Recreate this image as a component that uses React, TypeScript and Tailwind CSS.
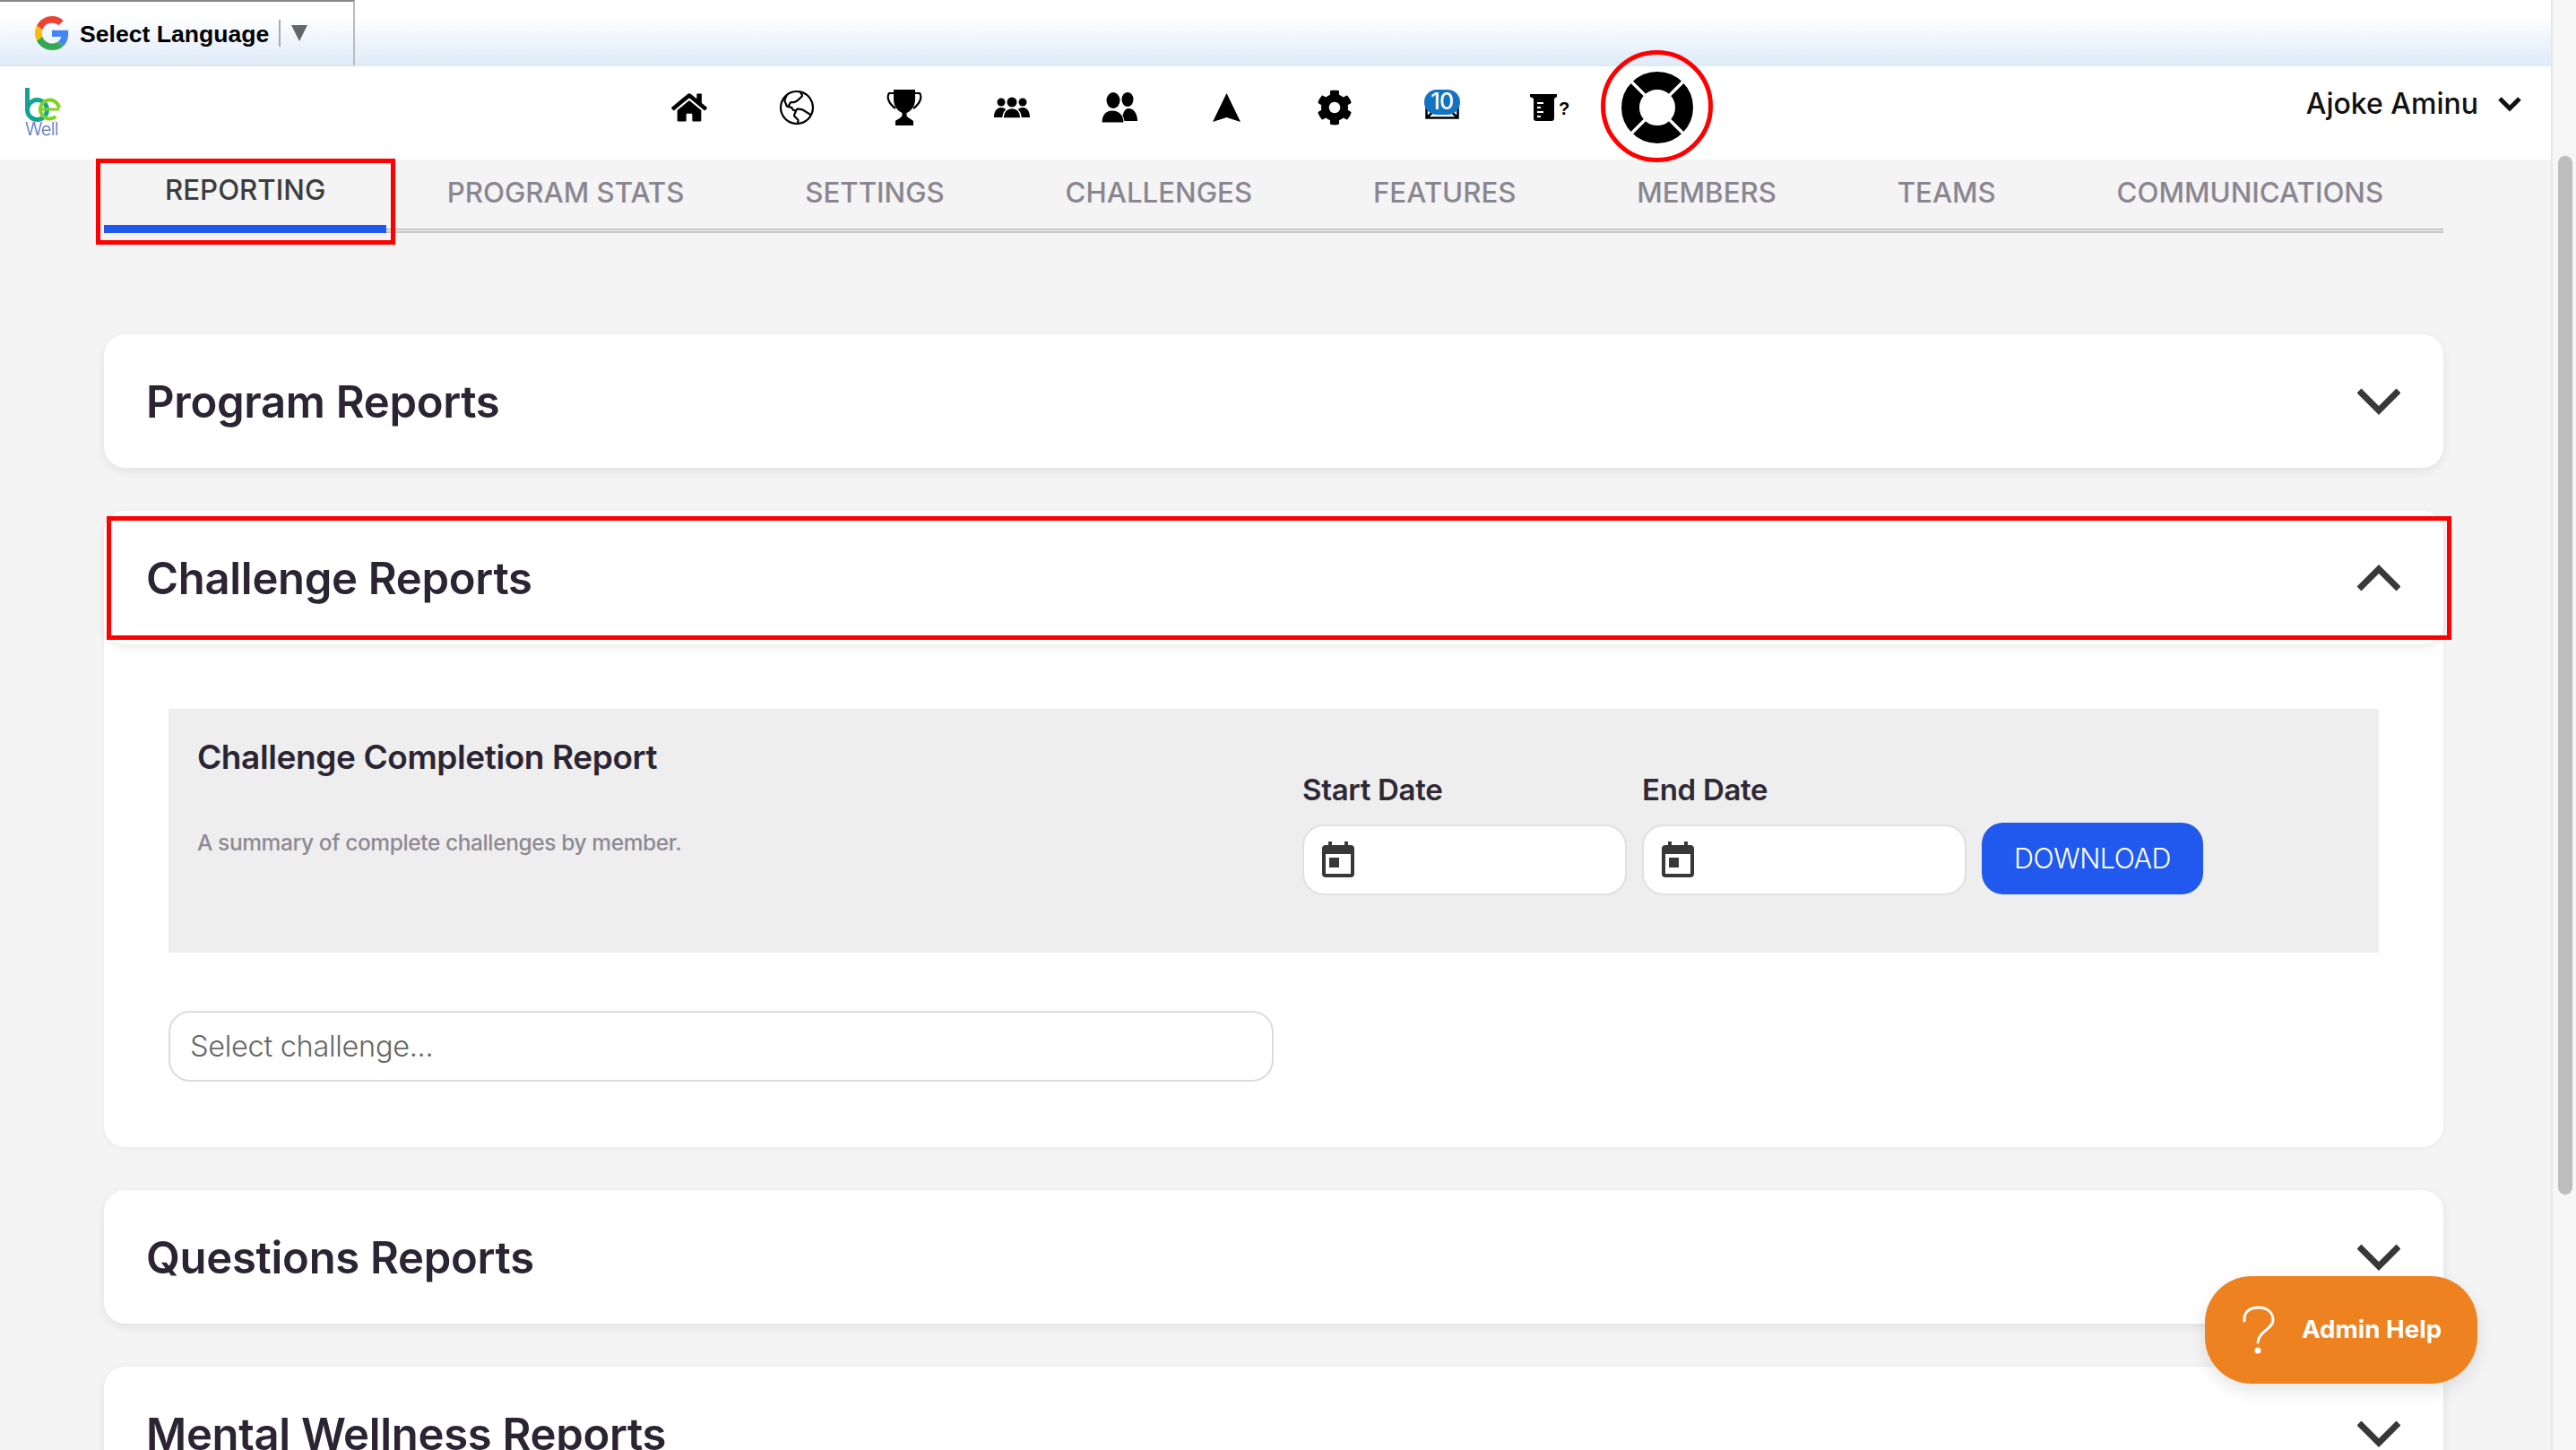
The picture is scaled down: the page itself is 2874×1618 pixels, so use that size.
import React from "react";
import { FaHome, FaCog } from "react-icons/fa";
import { PiGlobeHemisphereWestLight } from "react-icons/pi";

const tabs = ["PROGRAM STATS", "SETTINGS", "CHALLENGES", "FEATURES", "MEMBERS", "TEAMS", "COMMUNICATIONS"];

const Chevron = ({ up = false }: { up?: boolean }) => (
  <svg width="48" height="30" viewBox="0 0 48 30" fill="none" stroke="#383838" strokeWidth="7">
    <polyline points={up ? "2,27 24,5 46,27" : "2,3 24,25 46,3"} />
  </svg>
);

const GoogleG = () => (
  <svg width="38" height="38" viewBox="0 0 48 48">
    <path fill="#EA4335" d="M24 9.5c3.5 0 6.7 1.2 9.2 3.600l6.900-6.900C35.900 2.400 30.500 0 24 0 14.600 0 6.500 5.400 2.600 13.200l8 6.200C12.400 13.700 17.700 9.500 24 9.500z" />
    <path fill="#4285F4" d="M47 24.500c0-1.600-.1-3.100-.4-4.500H24v9h12.900c-.6 3-2.200 5.500-4.700 7.200l7.700 6c4.500-4.200 7.100-10.300 7.100-17.700z" />
    <path fill="#FBBC05" d="M10.600 28.600c-.5-1.400-.8-3-.8-4.600s.3-3.200.8-4.600l-8-6.200C.9 16.500 0 20.100 0 24s.9 7.500 2.600 10.800l8-6.200z" />
    <path fill="#34A853" d="M24 48c6.500 0 11.900-2.100 15.900-5.800l-7.700-6c-2.200 1.500-4.900 2.300-8.200 2.300-6.300 0-11.600-4.200-13.400-9.900l-8 6.200C6.500 42.600 14.600 48 24 48z" />
  </svg>
);

const Logo = () => (
  <div className="mt-[10px] flex w-[40px] flex-col items-start">
    <svg width="40" height="38" viewBox="0 0 40 38" fill="none">
      <path d="M2.500 0V25" stroke="#16a294" strokeWidth="5" />
      <circle cx="13.500" cy="24.500" r="11" stroke="#16a294" strokeWidth="5" />
      <circle cx="27.500" cy="24" r="10.500" stroke="#7ed321" strokeWidth="4" strokeDasharray="55 11" transform="rotate(50 27.500 24)" />
      <path d="M16 24H38" stroke="#7ed321" strokeWidth="3" />
    </svg>
    <span className="font-[Inter,sans-serif] text-[20px] leading-[17px] font-light tracking-[-0.6px] text-[#4f74c4]">Well</span>
  </div>
);

const Trophy = () => (
  <svg width="40" height="40" viewBox="0 0 40 40">
    <path d="M8 0H32V11C32 19 27 24 22.500 26V29C24 32 28 33 30 35V40H10V35C12 33 16 32 17.500 29V26C13 24 8 19 8 11Z" fill="#000" />
    <path d="M8 4H3C0 8 2 15 10 21M32 4H37C40 8 38 15 30 21" fill="none" stroke="#000" strokeWidth="2.200" />
  </svg>
);

const Group = () => (
  <svg width="40" height="24" viewBox="0 0 40 24">
    <circle cx="8" cy="6" r="4.500" /><circle cx="32" cy="6" r="4.500" />
    <path d="M0 23C0 16 3 12 8 12S16 16 16 23ZM24 23C24 16 27 12 32 12S40 16 40 23Z" />
    <circle cx="20" cy="6" r="5.500" />
    <path d="M10 24C10 17 14 12.500 20 12.500S30 17 30 24Z" stroke="#fff" strokeWidth="1.500" />
  </svg>
);

const People = () => (
  <svg width="40" height="34" viewBox="0 0 40 34">
    <ellipse cx="29" cy="8" rx="6.500" ry="8" />
    <path d="M22 32C24 22 26 18 30 18C36 18 40 24 40 32Z" />
    <ellipse cx="13" cy="9" rx="7.500" ry="9" />
    <path d="M0 34C0 25 5 20 12 20S25 25 25 34Z" stroke="#fff" strokeWidth="1" />
  </svg>
);

const Mail = () => (
  <div className="relative mb-[7px] h-[33px] w-[38px]">
    <svg className="absolute top-0 left-0" width="38" height="33" viewBox="0 0 38 33" fill="none" stroke="#000" strokeWidth="2.500">
      <path d="M1.500 14V31.500H36.500V14M2 31L14 20M36 31L24 20" />
    </svg>
    <span className="absolute top-0 -left-[1px] flex h-[28px] w-[40px] items-center justify-center rounded-full bg-[#1273c4] font-[Inter,sans-serif] text-[25px] font-medium tracking-[-0.5px] text-white">10</span>
  </div>
);

const Beaker = () => (
  <div className="flex items-end gap-[2px]">
    <svg width="30" height="30" viewBox="0 0 30 30">
      <path fillRule="evenodd" d="M0 0H30V3L27 5V27C27 29 26 30 24 30H7C5 30 4 29 4 27V5L0 3ZM8 9V11H15V9ZM8 14V16H12V14ZM8 19V21H15V19ZM8 24V26H12V24Z" />
    </svg>
    <span className="mb-[3px] font-['Liberation_Sans',sans-serif] text-[20px] leading-[22px] font-bold text-black">?</span>
  </div>
);

const Lifebuoy = () => (
  <svg width="80" height="80" viewBox="0 0 80 80" fill="none">
    <circle cx="40" cy="40" r="30" stroke="#000" strokeWidth="20" />
    <path d="M10 10L27 27M70 10L53 27M10 70L27 53M70 70L53 53" stroke="#fff" strokeWidth="3.500" />
  </svg>
);

const Calendar = () => (
  <svg className="shrink-0" width="36" height="40" viewBox="0 0 36 40" fill="#383838">
    <path fillRule="evenodd" d="M7 0H11V4H25V0H29V4H32C34.500 4 36 5.500 36 8V36C36 38.500 34.500 40 32 40H4C1.500 40 0 38.500 0 36V8C0 5.500 1.500 4 4 4H7ZM4 14V36H32V14Z" />
    <rect x="8" y="18" width="11" height="11" />
  </svg>
);

const DateField = ({ label }: { label: string }) => (
  <div className="w-[362px]">
    <div className="text-[33px] leading-[36px] font-semibold tracking-[-0.3px] text-[#2e2935]">{label}</div>
    <div className="mt-[21px] flex h-[79px] items-center rounded-[24px] border-2 border-[#e0e0e0] bg-white pb-[2px] pl-[20px]">
      <Calendar />
    </div>
  </div>
);

const ReportCard = ({ title }: { title: string }) => (
  <div className="flex h-[149px] shrink-0 items-center justify-between rounded-[24px] bg-white pr-[48px] pl-[47px] shadow-[0_4px_12px_rgba(0,0,0,0.08)]">
    <h2 className="mt-[2px] text-[49px] leading-none font-semibold tracking-[-0.3px] text-[#2b2533]">{title}</h2>
    <Chevron />
  </div>
);

export default function App() {
  return (
    <div className="relative flex h-[1618px] w-[2874px] overflow-hidden bg-[#f4f4f4] font-[Inter,sans-serif]">
      <div className="flex w-[2846px] flex-col">
        {/* translate bar */}
        <div className="h-[74px] shrink-0 bg-gradient-to-b from-white from-25% to-[#deeaf9]">
          <div className="flex h-[74px] w-[396px] items-center border-t-2 border-r-2 border-b-2 border-t-[#888] border-r-[#bbb] border-b-[#e0e4ea] pl-[39px] font-['Liberation_Sans',Arial,sans-serif]">
            <GoogleG />
            <span className="mt-[3px] ml-[12px] text-[26.600px] font-bold text-black">Select Language</span>
            <span className="ml-[11px] h-[30px] w-[2px] bg-[#aaa]" />
            <span className="ml-[12px] h-0 w-0 border-x-[9px] border-t-[18px] border-x-transparent border-t-[#666]" />
          </div>
        </div>

        {/* top nav */}
        <div className="flex h-[104px] shrink-0 items-center bg-white pr-[33px] pb-[12px] pl-[28px]">
          <Logo />
          <div className="ml-[641px] flex items-center">
            <div className="flex w-[120px] justify-center"><FaHome size={40} color="#000" /></div>
            <div className="flex w-[120px] justify-center"><PiGlobeHemisphereWestLight size={48} color="#000" /></div>
            <div className="flex w-[120px] justify-center"><Trophy /></div>
            <div className="flex w-[120px] justify-center"><Group /></div>
            <div className="flex w-[120px] justify-center"><People /></div>
            <div className="flex w-[120px] justify-center">
              <svg width="32" height="32" viewBox="0 0 32 32"><path d="M15.500 0L31 32L15.500 27L0 32Z" /></svg>
            </div>
            <div className="flex w-[120px] justify-center"><FaCog size={40} color="#000" /></div>
            <div className="flex w-[120px] justify-center"><Mail /></div>
            <div className="flex w-[120px] justify-center"><Beaker /></div>
            <div className="relative flex w-[120px] justify-center">
              <Lifebuoy />
              <span className="absolute top-[-24px] left-[-3px] h-[125px] w-[125px] rounded-full border-[5px] border-[#f00]" />
            </div>
          </div>
          <div className="ml-auto flex items-center gap-[22px] pb-[8px]">
            <span className="text-[32px] font-medium text-[#111]">Ajoke Aminu</span>
            <svg width="26" height="18" viewBox="0 0 26 18" fill="none" stroke="#111" strokeWidth="5"><polyline points="2,3 13,14 24,3" /></svg>
          </div>
        </div>

        <div className="flex flex-col pr-[120px] pl-[116px]">
          {/* tabs */}
          <div className="flex h-[82px] shrink-0 border-b-[5px] border-double border-[#c6c6c6] whitespace-nowrap">
            <div className="relative flex items-center px-[68px] pb-[8px]">
              <span className="text-[31.250px] font-medium text-[#3d3d3d]">REPORTING</span>
              <span className="absolute inset-x-0 -bottom-[5px] h-[9px] bg-[#2159ee]" />
              <span className="absolute -top-[1px] -right-[10px] -bottom-[18px] -left-[9px] border-[5px] border-[#f00]" />
            </div>
            {tabs.map((t) => (
              <div key={t} className="flex items-center px-[67.400px] pb-[2px] text-[31.250px] font-medium text-[#8a8690]">{t}</div>
            ))}
          </div>

          <div className="mt-[113px] flex flex-col gap-[48px]">
            <ReportCard title="Program Reports" />

            {/* challenge panel */}
            <div className="relative rounded-[24px] bg-white shadow-[0_2px_6px_rgba(0,0,0,0.04)]">
              <div className="flex h-[149px] items-center justify-between rounded-[24px] bg-white pr-[48px] pl-[47px] shadow-[0_4px_12px_rgba(0,0,0,0.08)]">
                <h2 className="mt-[2px] text-[49px] leading-none font-semibold tracking-[-0.3px] text-[#2b2533]">Challenge Reports</h2>
                <Chevron up />
              </div>
              <span className="absolute top-[6px] -right-[9px] left-[3px] h-[138px] border-[5px] border-[#f00]" />
              <div className="px-[72px] pt-[72px] pb-[73px]">
                <div className="flex h-[272px] bg-[#eeeeee]">
                  <div className="w-[1265px] pt-[32px] pl-[32px]">
                    <div className="text-[37px] leading-[44px] font-semibold tracking-[-0.4px] text-[#2b2533]">Challenge Completion Report</div>
                    <div className="mt-[55px] text-[24.500px] leading-[36px] font-medium tracking-[-0.4px] text-[#8d8a93]">A summary of complete challenges by member.</div>
                  </div>
                  <div className="flex items-end gap-[17px] pb-[64px]">
                    <DateField label="Start Date" />
                    <DateField label="End Date" />
                    <button className="mb-[1px] h-[80px] w-[247px] rounded-[24px] bg-[#2159ee] text-[30.500px] font-light tracking-[-0.5px] text-white">DOWNLOAD</button>
                  </div>
                </div>
                <div className="mt-[65px] flex h-[79px] w-[1233px] items-center rounded-[24px] border-2 border-[#dcdcdc] bg-white pt-[2px] pl-[22px] text-[32.500px] font-light tracking-[-0.3px] text-[#666]">Select challenge...</div>
              </div>
            </div>

            <ReportCard title="Questions Reports" />
            <ReportCard title="Mental Wellness Reports" />
          </div>
        </div>
      </div>

      {/* scrollbar */}
      <div className="w-[28px] shrink-0 border-l-2 border-[#e6e6e6] bg-[#f6f6f6] pt-[174px] pl-[6px]">
        <div className="h-[1159px] w-[16px] rounded-full bg-[#bdbdbd]" />
      </div>

      {/* help button */}
      <button className="absolute top-[1424px] left-[2460px] flex h-[120px] w-[304px] items-center rounded-[52px] bg-[#ee8220] pl-[42px] shadow-[0_8px_20px_rgba(0,0,0,0.1)]">
        <svg width="36" height="54" viewBox="0 0 36 54" fill="none" stroke="#fff" strokeWidth="3" strokeLinecap="round">
          <path d="M2 17C1 6 9 2 18 2C28 2 34 8 34 16C34 26 18 28 17 41" />
          <circle cx="17" cy="50" r="2" fill="#fff" />
        </svg>
        <span className="ml-[30px] text-[27.700px] font-bold text-white">Admin Help</span>
      </button>
    </div>
  );
}
